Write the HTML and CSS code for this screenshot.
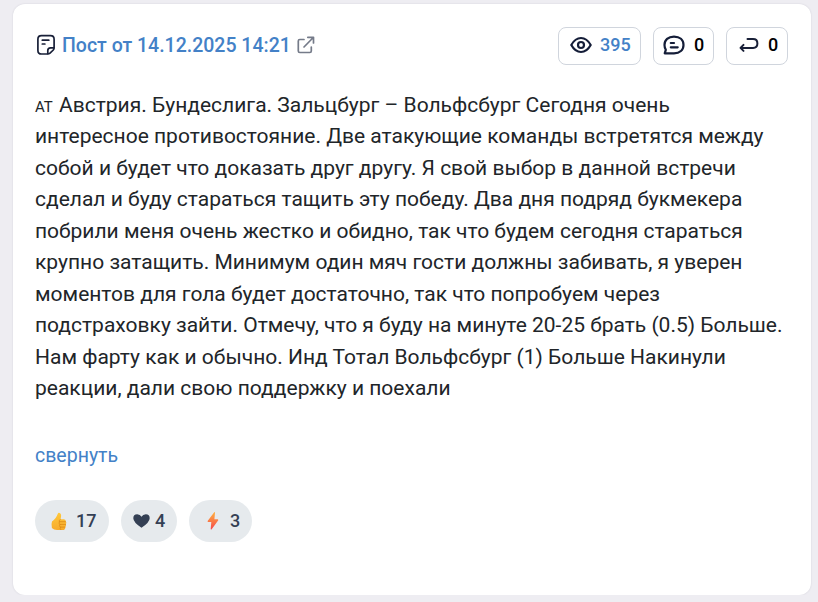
FILE: index.html
```html
<!DOCTYPE html>
<html lang="ru">
<head>
    <meta charset="UTF-8">
    <meta name="viewport" content="width=device-width, initial-scale=1.0">
    <title>Пост от 14.12.2025 14:21</title>
    <link rel="stylesheet" href="styles.css">
</head>
<body>
    <div class="card">
        <div class="card-header">
            <a class="post-link" href="#">
                <svg class="icon-note" width="20" height="22" viewBox="0 0 20 22" fill="none" stroke="#192038" stroke-width="1.7" stroke-linecap="round" stroke-linejoin="round">
                    <path d="M11.5 20H5.5Q1.9 20 1.9 16.4V5.2Q1.9 1.6 5.5 1.6H14.5Q18.1 1.6 18.1 5.2V13.8Q18.1 15 17.3 16L14 19.2Q13.1 20 11.5 20Z"/>
                    <path d="M11.8 19.6V16.5Q11.8 13.8 14.5 13.8H17.8M6.3 6.2H12.8M6.3 10H8.9"/>
                </svg>
                <span class="post-title">Пост от 14.12.2025 14:21</span>
                <svg class="icon-external" width="18" height="18" viewBox="0 0 18 18" fill="none" stroke="#757b89" stroke-width="1.7" stroke-linecap="round" stroke-linejoin="round">
                    <path d="M7 3.5H2.8Q1.3 3.5 1.3 5V15Q1.3 16.5 2.8 16.5H12.8Q14.3 16.5 14.3 15V11M7 11L16.3 1.5M10.8 1.3H16.5V7"/>
                </svg>
            </a>
            <div class="stats">
                <div class="stat stat-views">
                    <svg width="22" height="18" viewBox="0 0 22 18" fill="none" stroke="#141d38" stroke-width="2.2">
                        <path d="M1.3 9Q5.2 2 11 2T20.7 9Q16.8 16 11 16T1.3 9Z" stroke-linejoin="round"/>
                        <circle cx="11" cy="9" r="3"/>
                    </svg>
                    <span>395</span>
                </div>
                <div class="stat stat-comments">
                    <svg width="22" height="20" viewBox="0 0 22 20" fill="none" stroke="#141d38" stroke-width="2.2" stroke-linecap="round" stroke-linejoin="round">
                        <path d="M1.7 18.3L2.8 14.8Q1.5 12.6 1.5 10C1.5 5 5.2 1.6 11 1.6S20.5 5 20.5 10S16.8 18.3 11 18.3Z"/>
                        <path d="M7.8 8H11M7.8 12.3H14.7"/>
                    </svg>
                    <span>0</span>
                </div>
                <div class="stat stat-shares">
                    <svg width="20" height="16" viewBox="0 0 20 16" fill="none" stroke="#192038" stroke-width="2" stroke-linecap="round" stroke-linejoin="round">
                        <path d="M8.5 2H14Q18.4 2 18.4 6.4T14 10.9H1.8M4.5 7.9L1.5 10.9L4.5 13.9"/>
                    </svg>
                    <span>0</span>
                </div>
            </div>
        </div>

        <div class="post-text">
            <span class="flag">AT</span> Австрия. Бундеслига. Зальцбург – Вольфсбург Сегодня очень<br>
            интересное противостояние. Две атакующие команды встретятся между<br>
            собой и будет что доказать друг другу. Я свой выбор в данной встречи<br>
            сделал и буду стараться тащить эту победу. Два дня подряд букмекера<br>
            побрили меня очень жестко и обидно, так что будем сегодня стараться<br>
            крупно затащить. Минимум один мяч гости должны забивать, я уверен<br>
            моментов для гола будет достаточно, так что попробуем через<br>
            подстраховку зайти. Отмечу, что я буду на минуте 20-25 брать (0.5) Больше.<br>
            Нам фарту как и обычно. Инд Тотал Вольфсбург (1) Больше Накинули<br>
            реакции, дали свою поддержку и поехали
        </div>

        <a class="collapse" href="#">свернуть</a>

        <div class="reactions">
            <div class="reaction reaction-like">
                <svg width="16" height="19" viewBox="0 0 16 19">
                    <defs>
                        <linearGradient id="thumb" x1="0" y1="0" x2="0" y2="1">
                            <stop offset="0" stop-color="#ffc83b"/>
                            <stop offset="1" stop-color="#f7ab2c"/>
                        </linearGradient>
                    </defs>
                    <path fill="url(#thumb)" d="M1 9.5Q4.8 7.2 6.8 1.8Q7.2.5 8.6.9Q11.2 1.8 9.4 7.2H13Q15.1 7.5 14.8 9.4Q16 10.8 14.9 12.1Q15.6 13.8 14.3 14.9Q14.6 18 11.5 18H6Q2.8 18 .9 16Q0 12 1 9.5Z"/>
                    <path fill="none" stroke="#d88412" stroke-width=".7" stroke-linecap="round" d="M9.4 7.3Q7.6 8.2 8.3 9.7H14.5M8.4 9.8Q7.4 11.4 8.8 12.4H14.6M8.8 12.5Q7.8 14 9.3 15.1H14M9.3 15.2Q8.5 16.5 9.8 17.7"/>
                </svg>
                <span>17</span>
            </div>
            <div class="reaction reaction-heart">
                <svg width="17" height="14" viewBox="0 0 17 14">
                    <path fill="#344054" d="M8.5 13.8Q.3 8.2.3 4.2Q.3.3 4.2.3Q7.2.3 8.5 2.8Q9.8.3 12.8.3Q16.7.3 16.7 4.2Q16.7 8.2 8.5 13.8Z"/>
                </svg>
                <span>4</span>
            </div>
            <div class="reaction reaction-bolt">
                <svg width="12" height="18" viewBox="0 0 12 18">
                    <defs>
                        <linearGradient id="bolt" x1="0" y1="0" x2="0" y2="1">
                            <stop offset="0" stop-color="#ffb13e"/>
                            <stop offset="1" stop-color="#f5484d"/>
                        </linearGradient>
                    </defs>
                    <path fill="url(#bolt)" d="M7.2.2L.8 8.8Q.4 9.9 1.2 10H4.3L3.7 17Q4 18 4.7 17.3L11.1 8.5Q11.5 7.5 10.6 7.3H7.4L8 .7Q7.8-.2 7.2.2Z"/>
                </svg>
                <span>3</span>
            </div>
        </div>
    </div>
</body>
</html>
```
FILE: styles.css
```css
* {
    box-sizing: border-box;
}
body {
    margin: 0;
    padding: 4px 7px 0 13px;
    background: #eeedf2;
    font-family: Roboto, "Liberation Sans", sans-serif;
    color: #212529;
}
a {
    color: #4381c7;
    text-decoration: none;
}
.card {
    height: 591px;
    padding: 23px 23px 0 22px;
    background: #fff;
    border-radius: 12px;
    box-shadow: 0 0 2px rgba(40, 40, 70, 0.14);
}
.card-header {
    display: flex;
    justify-content: space-between;
    height: 38px;
}
.post-link {
    display: flex;
    align-items: center;
    height: 36px;
    padding-left: 1px;
}
.post-title {
    margin-left: 6px;
    font-size: 19.5px;
    font-weight: 500;
    white-space: nowrap;
}
.icon-external {
    margin-left: 6px;
}
.stats {
    display: flex;
    gap: 12px;
}
.stat {
    display: flex;
    align-items: center;
    height: 38px;
    padding: 0 0 3px 9px;
    border: 1px solid #d0d5dd;
    border-radius: 8px;
    color: #000;
    font-size: 18px;
    font-weight: 500;
}
.stat svg {
    flex: none;
    margin-right: 9px;
}
.stat-views {
    width: 83px;
    padding-left: 11px;
    color: #4381c7;
}
.stat-views svg {
    margin-right: 8px;
}
.stat-comments {
    width: 61px;
}
.stat-shares {
    width: 62px;
    padding-left: 12px;
}
.post-text {
    margin-top: 24.5px;
    font-size: 21px;
    line-height: 31.5px;
    white-space: nowrap;
}
.flag {
    margin-right: 1px;
    font-size: 15px;
    line-height: 1;
}
.collapse {
    display: block;
    margin-top: 35.5px;
    font-size: 19.5px;
    line-height: 32px;
}
.reactions {
    display: flex;
    gap: 12px;
    margin-top: 28px;
}
.reaction {
    display: flex;
    align-items: center;
    height: 42px;
    border-radius: 21px;
    background: #e6eaed;
    color: #344054;
    font-size: 18px;
    font-weight: 500;
}
.reaction span {
    padding-bottom: 1px;
}
.reaction-like {
    width: 74px;
    padding-left: 16px;
}
.reaction-like svg {
    margin-right: 9px;
}
.reaction-heart {
    width: 56px;
    padding-left: 12px;
}
.reaction-heart svg {
    margin-right: 5px;
}
.reaction-bolt {
    width: 63px;
    padding-left: 18px;
}
.reaction-bolt svg {
    margin-right: 11px;
}
```
